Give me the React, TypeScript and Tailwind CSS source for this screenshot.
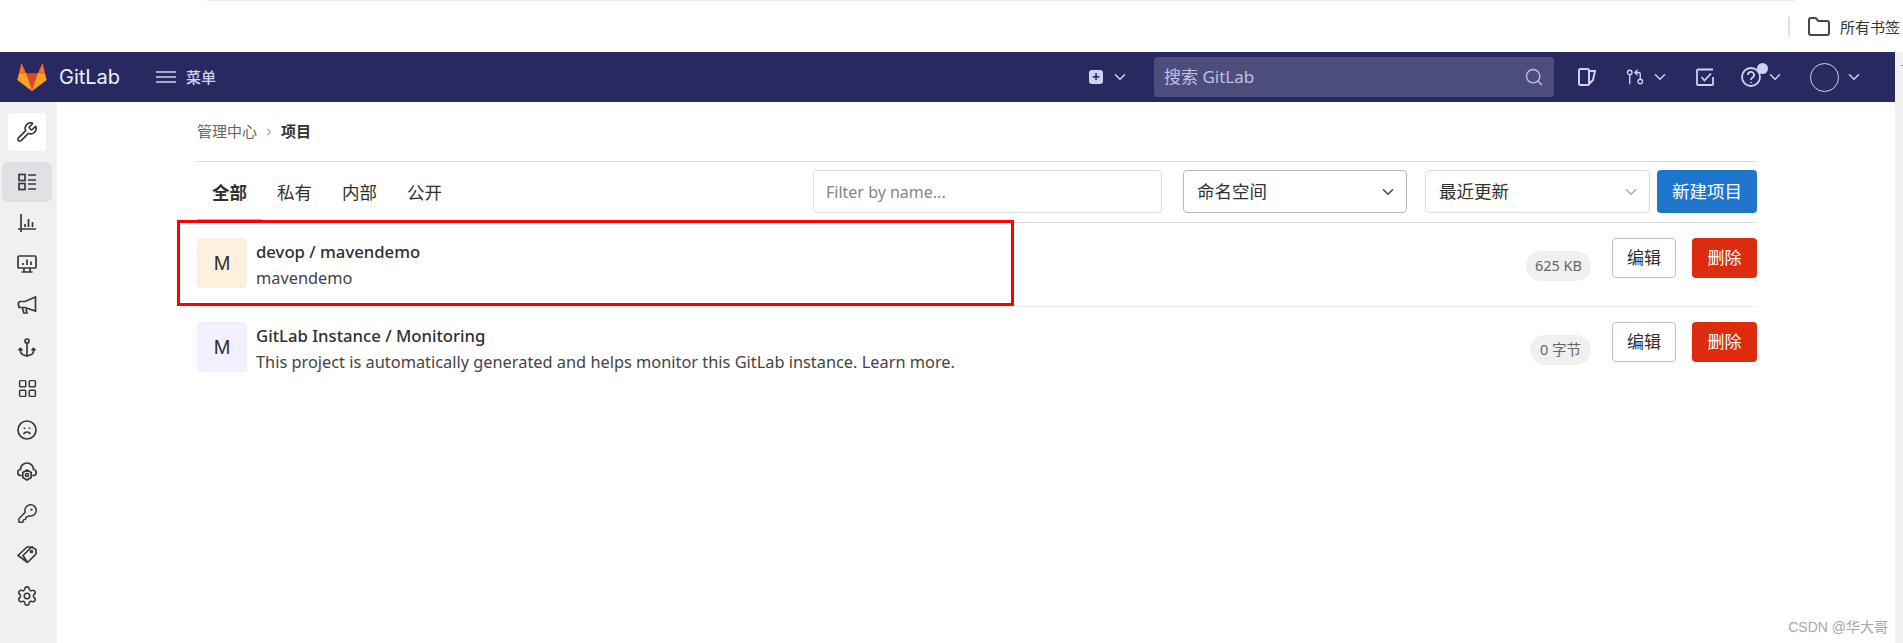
import React from 'react';
import { Wrench, LayoutGrid, KeyRound, Settings, ChevronDown, ChevronRight, Search, GitPullRequestArrow, Folder } from 'lucide-react';

const font = 'font-["Noto_Sans","Noto_Sans_CJK_SC",sans-serif]';

const stroke = { fill: 'none', stroke: '#3a383f', strokeWidth: 1.7 };

function OverviewIcon() {
  return (
    <svg width="18" height="18" viewBox="0 0 18 18" {...stroke}>
      <rect x="1" y="1.500" width="6" height="6" />
      <rect x="1" y="10.500" width="6" height="6" />
      <path d="M10 2h8M10 7h8M10 11h8M10 16h8" />
    </svg>
  );
}

function ChartIcon() {
  return (
    <svg width="18" height="18" viewBox="0 0 18 18" {...stroke}>
      <path d="M3 0v18M0 15h18M7 10v3M10.500 5v8M14.500 8v5" />
    </svg>
  );
}

function MonitorIcon() {
  return (
    <svg width="20" height="18" viewBox="0 0 20 18" {...stroke}>
      <rect x="1" y="1" width="18" height="12" rx="1" />
      <path d="M6 10V8M10 10V4.500M14 10V6.500M7 13v4M13 13v4M4.500 17h11" />
    </svg>
  );
}

function MegaphoneIcon() {
  return (
    <svg width="20" height="19" viewBox="0 0 20 19" {...stroke}>
      <path d="M18.500 1v14L8 11.500H3.500A2 2 0 0 1 1.500 9.500V7.500a2 2 0 0 1 2-2H8z" />
      <path d="M5.500 12l1.300 5h3.200l-1-4.500" />
    </svg>
  );
}

function AnchorIcon() {
  return (
    <svg width="18" height="19" viewBox="0 0 18 19" {...stroke}>
      <circle cx="9" cy="3" r="2" />
      <path d="M9 5v13M2.500 10v2.500A4 4 0 0 0 6 17l3 1 3-1a4 4 0 0 0 3.500-4.500V10" />
      <path d="M0.500 12.500l2-2 2 2M13.500 12.500l2-2 2 2" />
    </svg>
  );
}

function FrownIcon() {
  return (
    <svg width="20" height="20" viewBox="0 0 20 20" {...stroke}>
      <circle cx="10" cy="10" r="9" />
      <path d="M6.500 14c1-1.500 2.200-2 3.500-2s2.500.5 3.500 2M7.500 7.500v1.500M12.500 7.500v1.500" />
    </svg>
  );
}

function CloudGearIcon() {
  return (
    <svg width="20" height="19" viewBox="0 0 20 19" {...stroke}>
      <path d="M4.800 13.500H4a3 3 0 0 1-.500-6A6.500 6.500 0 0 1 16.500 7.500a3 3 0 0 1-.500 6h-.800" />
      <path d="M10 8l4.200 2.500v5L10 18l-4.200-2.500v-5z" />
      <circle cx="10" cy="13" r="1.500" />
    </svg>
  );
}

function TagsIcon() {
  return (
    <svg width="20" height="20" viewBox="0 0 20 20" {...stroke}>
      <path d="M1 10.500L10 2h4.500L6 10.500l4.500 7z" />
      <path d="M14.500 2l4.500 2.500v4.500l-8.500 8.500" />
      <circle cx="14.500" cy="6.500" r="1" />
    </svg>
  );
}

function Logo() {
  return (
    <svg width="30" height="28" viewBox="0 0 31 29">
      <path d="M15.500 29 0.500 17.500 4.500 0l5 11h12l5-11 4 17.500z" fill="#fc6d26" />
      <path d="M15.500 29 9.500 11h12z" fill="#e24329" />
      <path d="M15.500 29 0.500 17.500l1.500-6 7.500-.5z" fill="#fca326" />
      <path d="M15.500 29 30.500 17.500l-1.500-6-7.500-.5z" fill="#fca326" />
    </svg>
  );
}

const sideIcons = [
  <ChartIcon />, <MonitorIcon />, <MegaphoneIcon />, <AnchorIcon />,
  <LayoutGrid size={21} color="#3a383f" strokeWidth={1.700} />, <FrownIcon />, <CloudGearIcon />,
  <KeyRound size={21} color="#3a383f" strokeWidth={1.700} />, <TagsIcon />,
  <Settings size={22} color="#3a383f" strokeWidth={1.700} />,
];

function Sidebar() {
  return (
    <aside className="w-[57px] bg-[#f0f0f0] flex flex-col pt-[11px] shrink-0">
      <div className="w-[38px] h-[38px] ml-[8px] bg-white rounded-[4px] flex items-center justify-center mb-[11px]">
        <Wrench size={22} color="#303030" strokeWidth={1.700} />
      </div>
      <div className="w-[50px] h-[40px] ml-[2px] bg-[#e1e1e5] rounded-[6px] flex items-center justify-center">
        <OverviewIcon />
      </div>
      {sideIcons.map((icon, i) => (
        <div key={i} className="w-[54px] h-[41.500px] flex items-center justify-center">
          {icon}
        </div>
      ))}
    </aside>
  );
}

interface ProjectProps {
  tint: string;
  name: string;
  desc: string;
  size: string;
  sizeW: string;
  border?: boolean;
}

function Project({ tint, name, desc, size, sizeW, border }: ProjectProps) {
  return (
    <div className={`h-[84px] flex ${border ? 'border-b border-[#ececef]' : ''}`}>
      <div className={`w-[50px] h-[50px] mt-[15px] rounded-[4px] border border-[#eeeeee] flex items-center justify-center text-[20px] text-[#303030] font-["Liberation_Sans",sans-serif] ${tint}`}>
        M
      </div>
      <div className="ml-[9px] mt-[16px]">
        <div className="text-[16.700px] leading-[26px] font-medium text-[#303030]">{name}</div>
        <div className="text-[16.350px] leading-[26px] text-[#444]">{desc}</div>
      </div>
      <div className={`ml-auto mt-[28px] h-[30px] ${sizeW} rounded-full bg-[#f0f0f0] text-[14.500px] text-[#666] flex items-center justify-center mr-[21px]`}>
        {size}
      </div>
      <button className="mt-[15px] w-[64px] h-[40px] rounded-[4px] border border-[#bfbfbf] bg-white text-[17px] text-[#303030]">编辑</button>
      <button className="mt-[15px] ml-[16px] w-[65px] h-[40px] rounded-[4px] bg-[#dd2b0e] text-[17px] text-white">删除</button>
    </div>
  );
}

export default function App() {
  return (
    <div className={`relative h-[643px] w-[1903px] overflow-hidden bg-white ${font}`}>
      {/* browser chrome */}
      <div className="h-[52px] flex flex-col">
        <div className="ml-[207px] w-[1588px] h-[1px] bg-[#e8ebf5]" />
        <div className="flex items-center justify-end pr-[3px] mt-[14px]">
          <div className="w-[2px] h-[20px] bg-[#d3e3fd] mr-[17px]" />
          <Folder size={24} color="#444746" strokeWidth={2} className="mr-[9px]" />
          <span className="text-[15px] text-[#333] w-[60px] whitespace-nowrap">所有书签</span>
        </div>
      </div>

      <div className="flex h-[591px]">
        <div className="flex-1 flex flex-col min-w-0">
          {/* navbar */}
          <nav className="h-[50px] bg-[#292961] flex items-center text-[#d1d1f0] shrink-0 pr-[32px]">
            <div className="ml-[17px]"><Logo /></div>
            <span className="ml-[12px] w-[64px] text-[20px] text-[#f0f0f8] font-['Inter',sans-serif]">GitLab</span>
            <svg width="20" height="12" viewBox="0 0 20 12" fill="none" stroke="#d1d1f0" strokeWidth="1.700" className="ml-[33px]">
              <path d="M0 1h20M0 6h20M0 11h20" />
            </svg>
            <span className="ml-[10px] text-[15px] font-medium">菜单</span>

            <div className="ml-auto w-[14px] h-[14px] rounded-[3px] bg-[#d1d1f0] flex items-center justify-center text-[#292961] text-[14px] font-bold leading-none">+</div>
            <ChevronDown size={18} className="ml-[8px]" />
            <div className="ml-[25px] w-[400px] h-[40px] rounded-[4px] bg-[#4d4d7c] flex items-center pl-[10px] pr-[10px] justify-between">
              <span className="text-[17px] text-[#c0c0e0]">搜索 GitLab</span>
              <Search size={20} color="#c0c0e0" strokeWidth={1.700} />
            </div>
            <svg width="18" height="20" viewBox="0 0 18 20" fill="none" stroke="#d1d1f0" strokeWidth="2" className="ml-[24px]">
              <rect x="1" y="2" width="10" height="16" rx="1.500" />
              <path d="M11 4h6l-2 9-4 4" />
            </svg>
            <GitPullRequestArrow size={18} className="ml-[30px]" strokeWidth={1.800} />
            <ChevronDown size={18} className="ml-[7px]" />
            <svg width="18" height="18" viewBox="0 0 18 18" fill="none" stroke="#d1d1f0" strokeWidth="1.800" className="ml-[27px]">
              <path d="M17 1.500H2a1 1 0 0 0-1 1V16a1 1 0 0 0 1 1h14a1 1 0 0 0 1-1V9M5.500 9l3 3.500L15 5.500" />
            </svg>
            <div className="relative ml-[27px]">
              <svg width="20" height="20" viewBox="0 0 20 20" fill="none" stroke="#d1d1f0" strokeWidth="1.800">
                <circle cx="10" cy="10" r="9" />
                <path d="M7 8a3 3 0 1 1 4.500 2.500c-1 .6-1.500 1-1.500 2.500M10 15v1" />
              </svg>
              <div className="absolute -top-[4px] left-[16px] w-[11px] h-[11px] rounded-full bg-[#d1d1f0]" />
            </div>
            <ChevronDown size={18} className="ml-[5px]" />
            <div className="ml-[26px] w-[29px] h-[29px] rounded-full border border-[#d1d1f0]" />
            <ChevronDown size={18} className="ml-[6px]" />
          </nav>

          <div className="flex flex-1 min-h-0">
            <Sidebar />
            <main className="flex-1 pl-[140px] pr-[138px]">
              {/* breadcrumb */}
              <div className="h-[60px] flex items-center border-b border-[#dcdcde] text-[15px]">
                <span className="text-[#666]">管理中心</span>
                <ChevronRight size={12} color="#777" className="mx-[6px]" />
                <span className="font-semibold text-[#303030]">项目</span>
              </div>

              {/* tabs and filters */}
              <div className="h-[61px] flex border-b border-[#dcdcde]">
                <div className="flex text-[17.500px] text-[#303030]">
                  <div className="w-[65px] h-[60px] text-center pt-[17px] font-bold border-b-[3px] border-[#b0aec0]">全部</div>
                  <div className="w-[65px] text-center pt-[17px]">私有</div>
                  <div className="w-[65px] text-center pt-[17px]">内部</div>
                  <div className="w-[65px] text-center pt-[17px]">公开</div>
                </div>
                <input
                  placeholder="Filter by name..."
                  className="ml-auto mt-[8px] w-[349px] h-[43px] rounded-[4px] border border-[#dcdcde] px-[12px] text-[16px] placeholder:text-[#868686] outline-none"
                />
                <div className="ml-[21px] mt-[8px] w-[224px] h-[43px] rounded-[4px] border border-[#b8b8b8] flex items-center justify-between pl-[13px] pr-[9px] text-[17.500px] text-[#303030]">
                  命名空间
                  <ChevronDown size={18} color="#444" strokeWidth={2} />
                </div>
                <div className="ml-[18px] mt-[8px] w-[225px] h-[43px] rounded-[4px] border border-[#dcdcde] flex items-center justify-between pl-[13px] pr-[9px] text-[17.500px] text-[#303030]">
                  最近更新
                  <ChevronDown size={18} color="#aaa" strokeWidth={2} />
                </div>
                <button className="ml-[7px] mt-[8px] w-[100px] h-[43px] rounded-[4px] bg-[#1f75cb] text-[17.500px] text-white">新建项目</button>
              </div>

              <Project tint="bg-[#fdf1dd]" name="devop / mavendemo" desc="mavendemo" size="625 KB" sizeW="w-[65px]" border />
              <Project tint="bg-[#f4f0ff]" name="GitLab Instance / Monitoring" desc="This project is automatically generated and helps monitor this GitLab instance. Learn more." size="0 字节" sizeW="w-[61px]" />
            </main>
          </div>
        </div>
        <div className="w-[8px] bg-[#f1f1f1] shrink-0 pt-[13px]">
          <div className="ml-[6px] w-[2px] h-[1px] bg-[#888888]" />
        </div>
      </div>

      {/* red annotation box from the original screenshot */}
      <div className="absolute left-[177px] top-[220px] w-[837px] h-[86px] border-[3px] border-[#ff0000]" />
      <div className="absolute right-[15px] bottom-[5px] text-[14px] text-[#a8a8a8] font-['Liberation_Sans','Noto_Sans_CJK_SC',sans-serif]">CSDN @华大哥</div>
    </div>
  );
}
